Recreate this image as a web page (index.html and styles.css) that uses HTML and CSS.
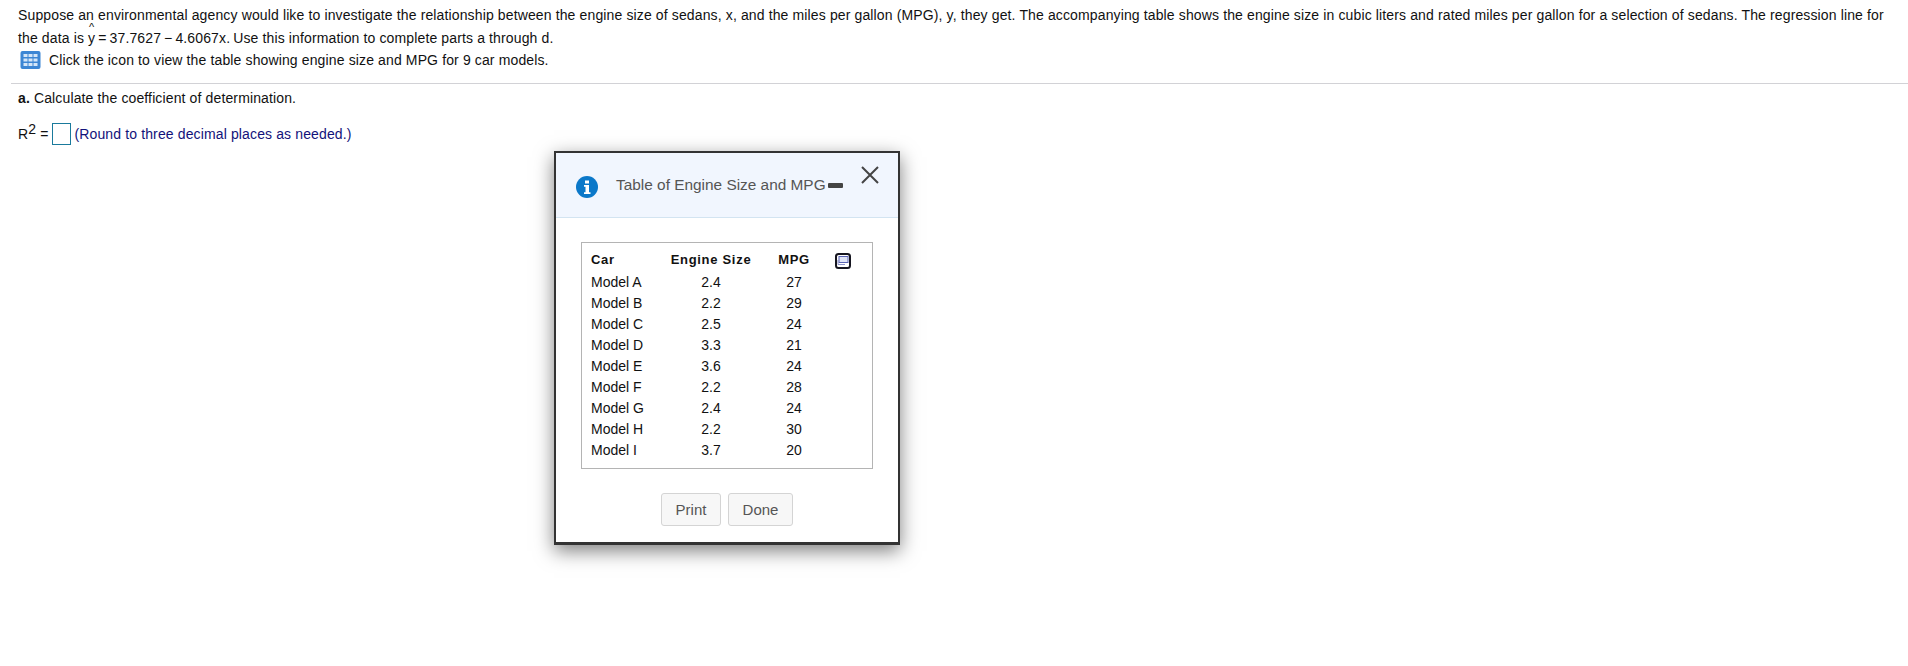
FILE: index.html
```html
<!DOCTYPE html>
<html lang="en">
<head>
<meta charset="utf-8">
<title>Engine Size and MPG</title>
<link rel="stylesheet" href="styles.css">
</head>
<body>
<main class="question">
  <section class="stem">
    <p class="line">Suppose an environmental agency would like to investigate the relationship between the engine size of sedans, x, and the miles per gallon (MPG), y, they get. The accompanying table shows the engine size in cubic liters and rated miles per gallon for a selection of sedans. The regression line for</p>
    <p class="line">the data is <span class="hat">y</span><span class="formula"> = 37.7627 − 4.6067x. </span>Use this information to complete parts a through d.</p>
    <p class="tool">
      <svg class="grid-icon" viewBox="0 0 20 18" aria-hidden="true"><rect width="20" height="18" rx="2" fill="#3d86d4"/><g fill="#d5e6f8"><rect x="3" y="3" width="4" height="3"/><rect x="8" y="3" width="4" height="3"/><rect x="13" y="3" width="4" height="3"/><rect x="3" y="7.500" width="4" height="3"/><rect x="8" y="7.500" width="4" height="3"/><rect x="13" y="7.500" width="4" height="3"/><rect x="3" y="12" width="4" height="3"/><rect x="8" y="12" width="4" height="3"/><rect x="13" y="12" width="4" height="3"/></g></svg>
      <span>Click the icon to view the table showing engine size and MPG for 9 car models.</span>
    </p>
  </section>
  <section class="part">
    <p class="line"><b>a.</b> Calculate the coefficient of determination.</p>
    <p class="answer"><span>R<sup>2</sup> =</span><span class="input"></span><span class="hint">(Round to three decimal places as needed.)</span></p>
  </section>
</main>

<aside class="modal">
  <header class="modal-head">
    <svg class="info" viewBox="0 0 22 22" aria-hidden="true"><circle cx="11" cy="11" r="11" fill="#0b78c9"/><path d="M9 4.500h4v3H9zM8 9h5v7.200h1.500V18h-6.500v-1.800H9.500V10.800H8z" fill="#fff"/></svg>
    <h2 class="modal-title">Table of Engine Size and MPG</h2>
    <span class="minimize"></span>
    <svg class="close" viewBox="0 0 18 18" aria-hidden="true"><path d="M1 1 17 17M17 1 1 17" stroke="#444" stroke-width="2" fill="none"/></svg>
  </header>
  <div class="modal-body">
    <div class="table-box">
      <table class="data">
        <thead><tr><th class="c-car">Car</th><th class="c-size">Engine Size</th><th class="c-mpg">MPG</th></tr></thead>
        <tbody>
          <tr><td class="c-car">Model A</td><td>2.4</td><td>27</td></tr>
          <tr><td class="c-car">Model B</td><td>2.2</td><td>29</td></tr>
          <tr><td class="c-car">Model C</td><td>2.5</td><td>24</td></tr>
          <tr><td class="c-car">Model D</td><td>3.3</td><td>21</td></tr>
          <tr><td class="c-car">Model E</td><td>3.6</td><td>24</td></tr>
          <tr><td class="c-car">Model F</td><td>2.2</td><td>28</td></tr>
          <tr><td class="c-car">Model G</td><td>2.4</td><td>24</td></tr>
          <tr><td class="c-car">Model H</td><td>2.2</td><td>30</td></tr>
          <tr><td class="c-car">Model I</td><td>3.7</td><td>20</td></tr>
        </tbody>
      </table>
      <svg class="copy" viewBox="0 0 16 16" aria-hidden="true"><rect x="1" y="1" width="14" height="14" rx="2.500" fill="#fff" stroke="#15151f" stroke-width="2"/><rect x="4" y="3.500" width="9" height="6" fill="#dfe4f6" stroke="#5a64b4"/><path d="M3 7v4.500h7" fill="none" stroke="#8a90c8"/></svg>
    </div>
    <div class="actions">
      <button class="btn print">Print</button>
      <button class="btn done">Done</button>
    </div>
  </div>
</aside>
</body>
</html>
```
FILE: styles.css
```css
* { box-sizing: border-box; }
html, body { margin: 0; padding: 0; background: #fff; }
body {
  width: 1908px;
  height: 666px;
  overflow: hidden;
  font-family: "Liberation Sans", Arial, sans-serif;
  font-size: 14px;
  letter-spacing: 0.13px;
  color: #111;
  position: relative;
}
p { margin: 0; }
.stem { padding: 5px 0 0 7px; height: 84px; border-bottom: 1px solid #d2d2d6; margin-left: 11px; }
.line { line-height: 21px; white-space: nowrap; }
.stem .line + .line { margin-top: 2px; }
.formula { word-spacing: -1px; }
.tool { display: flex; align-items: center; gap: 8px; height: 21px; margin: 0 0 0 2px; white-space: nowrap; }
.grid-icon { width: 21px; height: 18px; flex: none; }
.hat { position: relative; display: inline-block; }
.hat::before {
  content: "^";
  position: absolute;
  left: 0;
  right: 0;
  top: -7px;
  font-size: 11px;
  line-height: 12px;
  text-align: center;
}
.part { padding: 4px 0 0 18px; }
.part b { font-weight: 700; }
.answer { display: flex; align-items: center; margin-top: 14px; height: 22px; white-space: nowrap; }
.answer sup { font-size: 14px; line-height: 0; vertical-align: 5px; }
.input { width: 19px; height: 22px; border: 1px solid #1a7a9c; margin: 0 4px 0 3px; }
.hint { color: #12127a; }

.modal {
  position: absolute;
  left: 554px;
  top: 151px;
  width: 346px;
  height: 394px;
  background: #fff;
  border: 3px solid #333;
  border-width: 2px 2px 3px 2px;
  box-shadow: 0 6px 18px rgba(0, 0, 0, 0.5);
  display: flex;
  flex-direction: column;
  letter-spacing: 0;
}
.modal-head {
  height: 65px;
  background: #f1f6fe;
  border-bottom: 1px solid #d3e4f1;
  display: flex;
  align-items: center;
  position: relative;
  padding-left: 20px;
  flex: none;
}
.info { width: 22px; height: 22px; flex: none; margin-top: 3px; }
.modal-title {
  margin: 0 0 0 18px;
  font-size: 15.400px;
  font-weight: 400;
  color: #555;
  white-space: nowrap;
}
.minimize { width: 15px; height: 5px; background: #444; margin: 0 0 0 2px; border-radius: 1px; }
.close { position: absolute; left: 305px; top: 13px; width: 18px; height: 18px; }
.modal-body { flex: 1; display: flex; flex-direction: column; align-items: center; }
.table-box {
  position: relative;
  margin-top: 24px;
  width: 292px;
  height: 227px;
  border: 1px solid #b4b4b4;
  padding: 6px 0 0 9px;
}
.data { border-collapse: collapse; font-size: 14px; color: #111; }
.data th, .data td { height: 21px; padding: 0; text-align: center; font-size: 14px; }
.data th { height: 22px; padding-bottom: 2px; font-weight: 700; font-size: 13px; letter-spacing: 0.700px; }
.c-size { width: 128px; }
.c-mpg { width: 38px; }
.data .c-car { width: 56px; text-align: left; padding-left: 0; }
.copy { position: absolute; left: 253px; top: 10px; width: 16px; height: 16px; }
.actions { display: flex; gap: 7px; margin-top: 24px; }
.btn {
  height: 33px;
  padding: 0;
  border: 1px solid #d4d4d4;
  border-radius: 3px;
  background: #f7f7f7;
  color: #555;
  font: 15px "Liberation Sans", Arial, sans-serif;
}
.print { width: 60px; }
.done { width: 65px; }
```
